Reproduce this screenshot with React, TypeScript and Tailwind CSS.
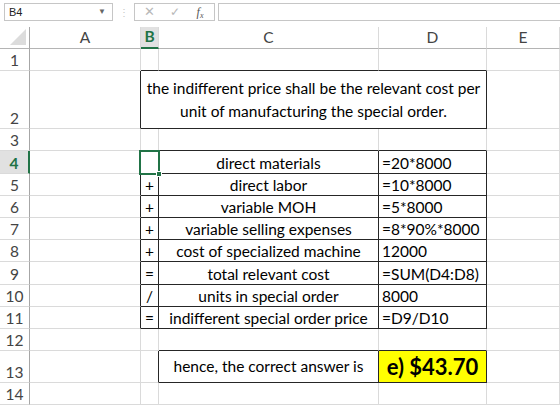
import React from "react";

type CellProps = {
    r?: boolean;
    b?: boolean;
    middle?: boolean;
    span?: string;
    className?: string;
    children?: React.ReactNode;
};

// one worksheet cell; r / b switch the right or bottom edge from gridline to a black border
function Cell({ r, b, middle, span = "", className = "", children }: CellProps) {
    const right = r ? "border-r-[#262626]" : "border-r-[#dadada]";
    const bottom = b ? "border-b-[#262626]" : "border-b-[#dadada]";
    const align = middle ? "items-center" : "items-end";
    return (
        <div
            className={`flex ${align} border-r border-b ${right} ${bottom} ${span} ${className}`}
        >
            {children}
        </div>
    );
}

function RowHead({ n, active }: { n: number; active?: boolean }) {
    return (
        <div
            className={
                active
                    ? "flex items-end justify-center border-b border-b-[#dadada] border-r-2 border-r-[#217346] bg-[#e1e1e1] font-bold text-[#217346] leading-[20px]"
                    : "flex items-end justify-center border-b border-b-[#dadada] border-r border-r-[#a6a6a6] text-[#444] leading-[20px]"
            }
        >
            {n}
        </div>
    );
}

function ColHead({ label, active }: { label: string; active?: boolean }) {
    return (
        <div
            className={
                active
                    ? "flex items-center justify-center border-r border-r-[#dadada] border-b-2 border-b-[#217346] bg-[#e1e1e1] font-bold text-[#217346]"
                    : "flex items-center justify-center border-r border-r-[#dadada] border-b border-b-[#b4b4b4] text-[#444]"
            }
        >
            {label}
        </div>
    );
}

const rows = [
    { op: "", label: "direct materials", value: "=20*8000" },
    { op: "+", label: "direct labor", value: "=10*8000" },
    { op: "+", label: "variable MOH", value: "=5*8000" },
    { op: "+", label: "variable selling expenses", value: "=8*90%*8000" },
    { op: "+", label: "cost of specialized machine", value: "12000" },
    { op: "=", label: "total relevant cost", value: "=SUM(D4:D8)" },
    { op: "/", label: "units in special order", value: "8000" },
    { op: "=", label: "indifferent special order price", value: "=D9/D10" },
];

function FormulaBar() {
    return (
        <div className="flex h-[27px] items-start pt-[3px] pl-[4px] font-['Liberation_Sans',sans-serif] text-[11px]">
            <div className="flex h-[18px] w-[109px] items-center justify-between border border-[#c6c6c6] pl-[4px] pr-[6px] text-[#222]">
                <span>B4</span>
                <span className="text-[8px] text-[#666]">▼</span>
            </div>
            <div className="flex h-[18px] w-[21px] items-center justify-center text-[10px] text-[#c6c6c6]">
                ⋮
            </div>
            <div className="flex h-[18px] w-[81px] items-center border border-[#c6c6c6] text-[#b8b8b8]">
                <span className="w-[28px] text-center text-[13px]">✕</span>
                <span className="w-[24px] text-center text-[12px]">✓</span>
                <span className="w-[26px] text-center font-['Liberation_Serif',serif] text-[12px] italic text-[#555]">
                    f<sub className="text-[8px]">x</sub>
                </span>
            </div>
            <div className="ml-[3px] h-[18px] flex-1 border border-r-0 border-[#c6c6c6]" />
        </div>
    );
}

export default function App() {
    return (
        <div className="h-[405px] w-[560px] overflow-hidden bg-white font-['Lato','Liberation_Sans',sans-serif] text-[15.5px] text-black">
            <FormulaBar />
            <div className="relative grid grid-cols-[30px_111px_18px_220px_108px_73px] grid-rows-[22px_22px_58px_22px_23px_22px_22px_22px_22px_23px_22px_22px_22px_32px_22px]">
                {/* column headers */}
                <div className="relative border-r border-r-[#a6a6a6] border-b border-b-[#b4b4b4]">
                    <div className="absolute right-[3px] bottom-[3px] h-0 w-0 border-b-[16px] border-l-[16px] border-b-[#dcdcdc] border-l-transparent" />
                </div>
                <ColHead label="A" />
                <ColHead label="B" active />
                <ColHead label="C" />
                <ColHead label="D" />
                <ColHead label="E" />

                {/* row 1 */}
                <RowHead n={1} />
                <Cell />
                <Cell b />
                <Cell b />
                <Cell b />
                <Cell />

                {/* row 2 */}
                <RowHead n={2} />
                <Cell r />
                <Cell r b middle span="col-span-3" className="justify-center text-center leading-[23px]">
                    <div>
                        the indifferent price shall be the relevant cost per
                        <br />
                        unit of manufacturing the special order.
                    </div>
                </Cell>
                <Cell />

                {/* row 3 */}
                <RowHead n={3} />
                <Cell />
                <Cell b />
                <Cell b />
                <Cell b />
                <Cell />

                {/* rows 4 - 11 */}
                {rows.map((row, i) => (
                    <React.Fragment key={i}>
                        <RowHead n={i + 4} active={i === 0} />
                        <Cell r />
                        <Cell r b className="justify-center leading-[20px]">
                            {row.op}
                        </Cell>
                        <Cell r b className="justify-center leading-[20px]">
                            {row.label}
                        </Cell>
                        <Cell r b className="pl-[3px] leading-[20px]">
                            {row.value}
                        </Cell>
                        <Cell />
                    </React.Fragment>
                ))}

                {/* row 12 */}
                <RowHead n={12} />
                <Cell />
                <Cell />
                <Cell b />
                <Cell b />
                <Cell />

                {/* row 13 */}
                <RowHead n={13} />
                <Cell />
                <Cell r />
                <Cell r b middle className="justify-center">
                    hence, the correct answer is
                </Cell>
                <Cell r b middle className="justify-center bg-[#ffff00] text-[22px] font-bold">
                    e) $43.70
                </Cell>
                <Cell />

                {/* row 14 */}
                <RowHead n={14} />
                <Cell />
                <Cell />
                <Cell />
                <Cell />
                <Cell />

                {/* active cell selection on B4 */}
                <div className="pointer-events-none absolute top-[123px] left-[139px] h-[25px] w-[21px] border-2 border-[#217346]">
                    <div className="absolute -right-[4px] -bottom-[4px] h-[6px] w-[6px] border border-white bg-[#217346]" />
                </div>
            </div>
        </div>
    );
}
